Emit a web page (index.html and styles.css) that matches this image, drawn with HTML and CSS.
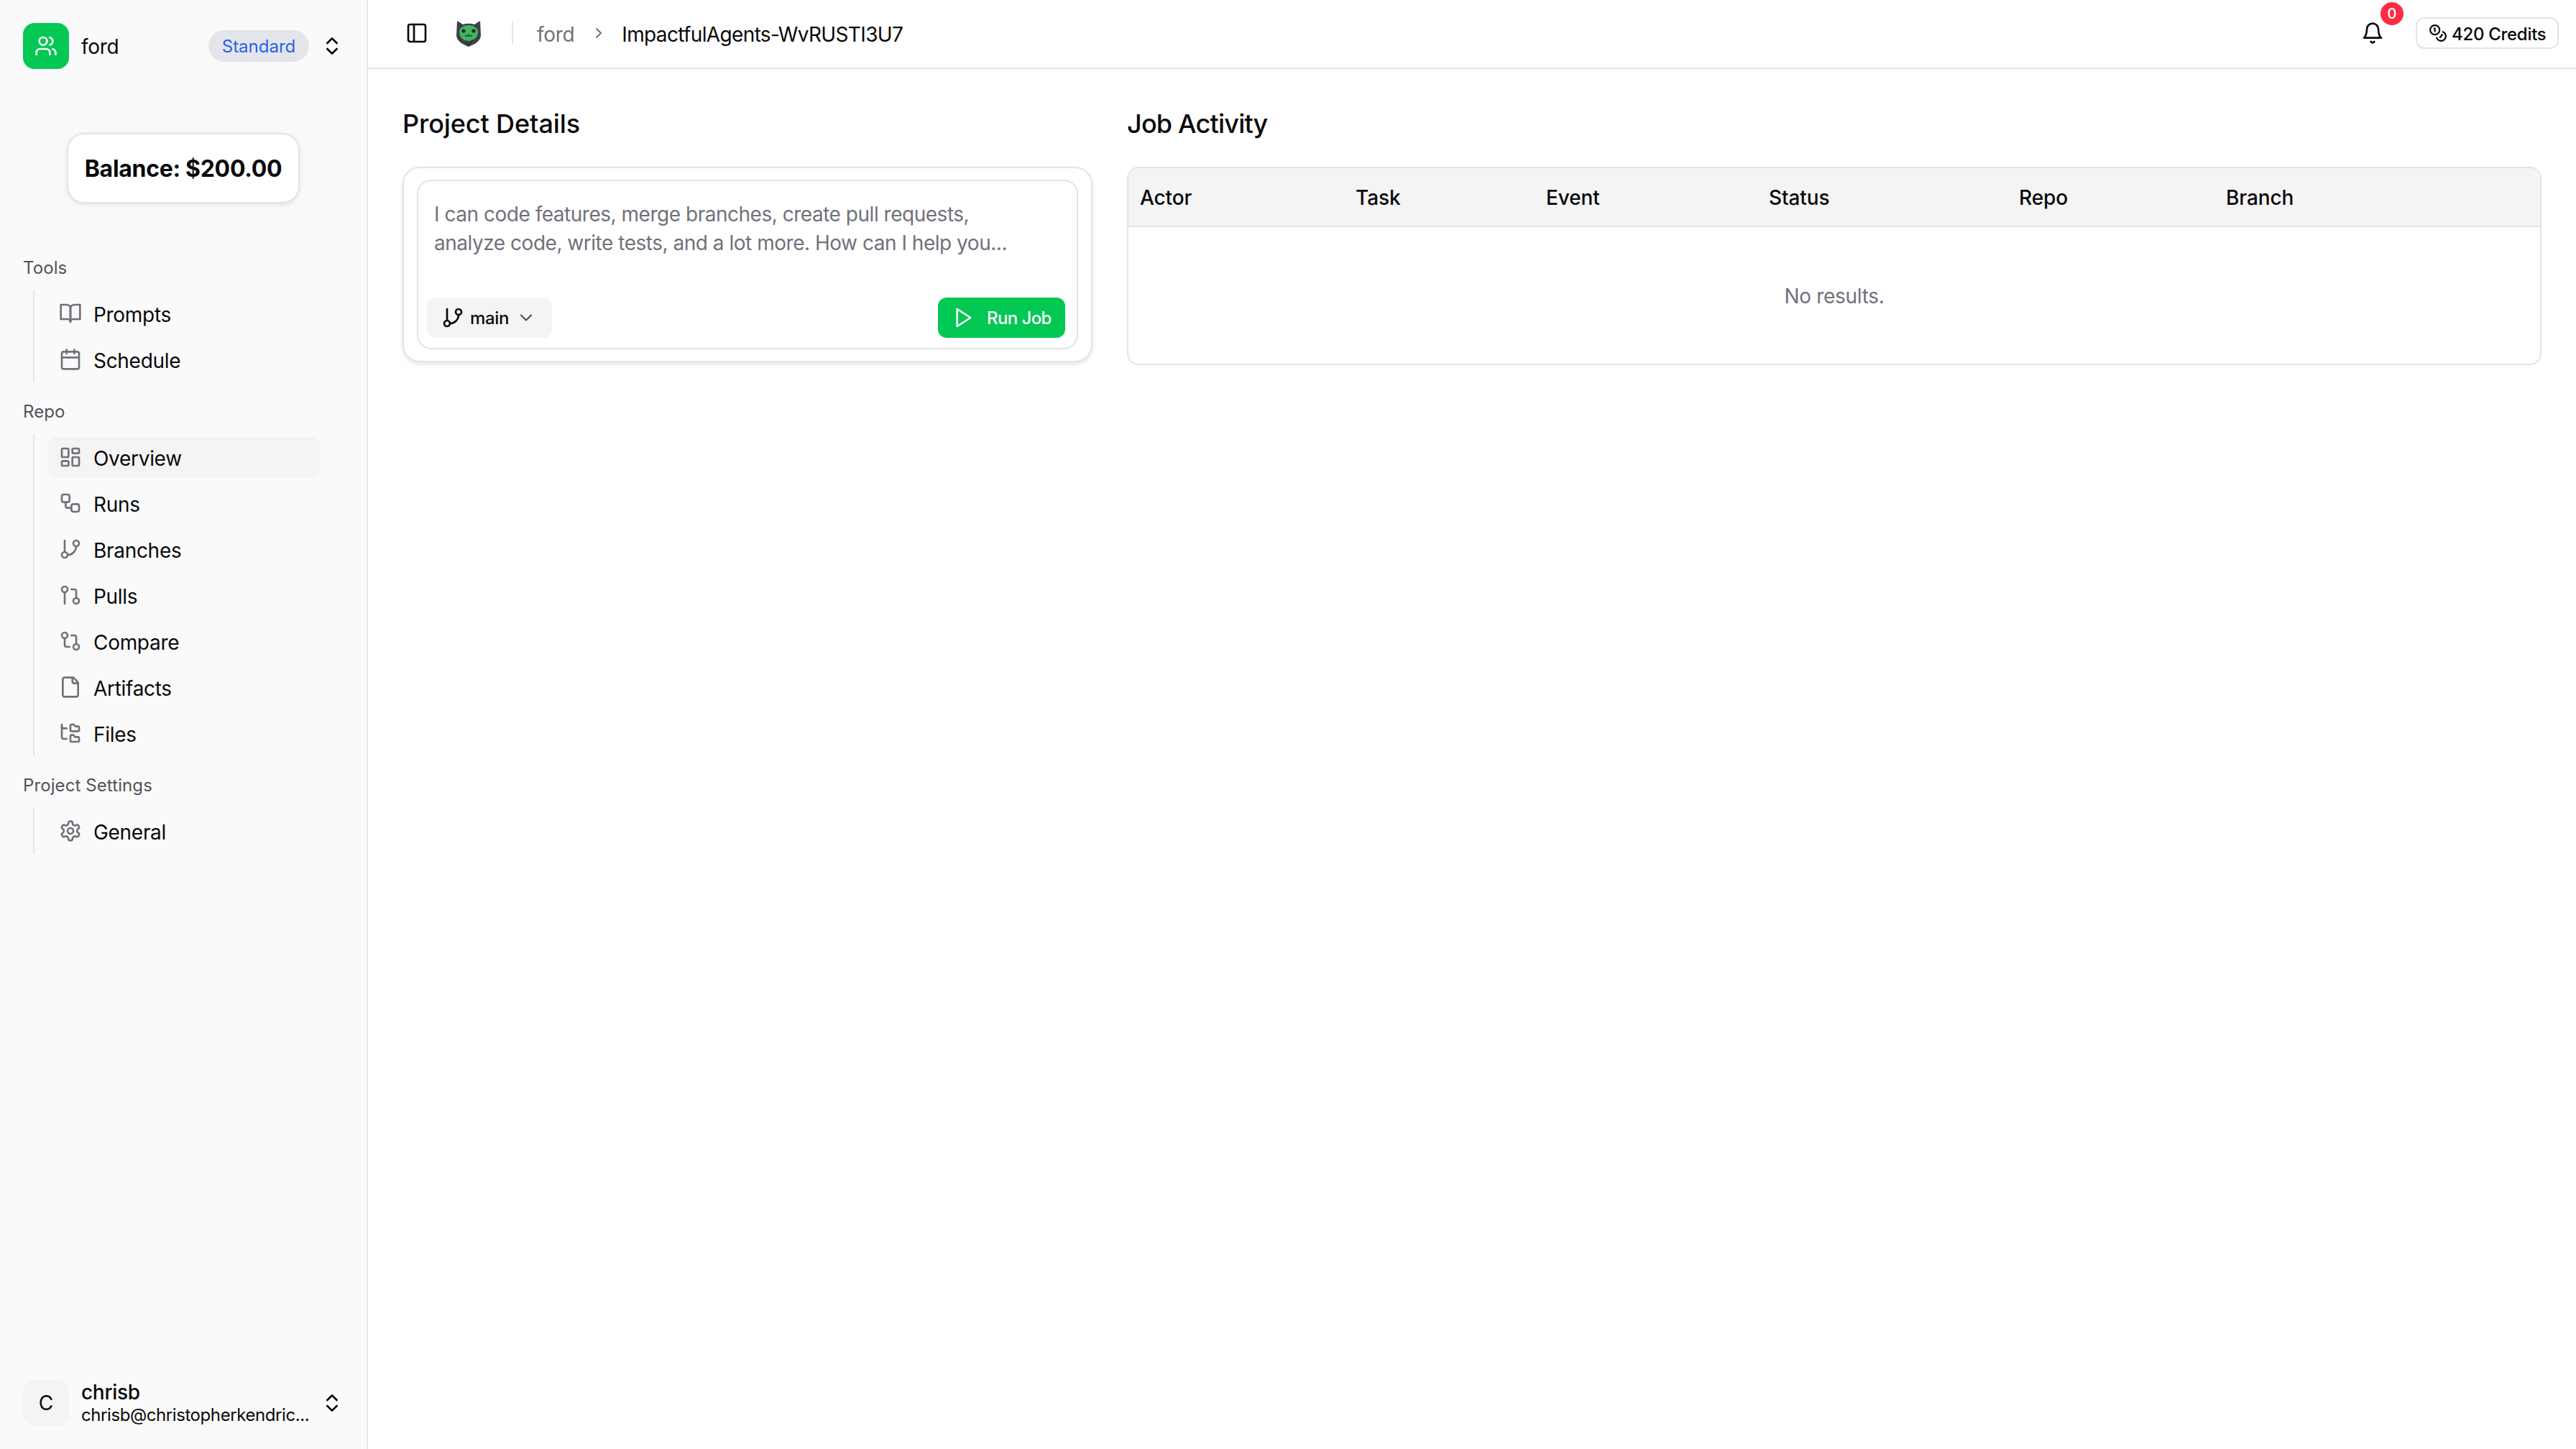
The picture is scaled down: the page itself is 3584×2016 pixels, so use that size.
FILE: index.html
```html
<!DOCTYPE html>
<html lang="en">
<head>
<meta charset="utf-8">
<title>ImpactfulAgents</title>
<link rel="stylesheet" href="styles.css">
</head>
<body>
<svg class="sprite" xmlns="http://www.w3.org/2000/svg">
<symbol id="users" viewBox="0 0 24 24"><path d="M16 21v-2a4 4 0 0 0-4-4H6a4 4 0 0 0-4 4v2"/><circle cx="9" cy="7" r="4"/><path d="M22 21v-2a4 4 0 0 0-3-3.87"/><path d="M16 3.13a4 4 0 0 1 0 7.75"/></symbol>
<symbol id="updown" viewBox="0 0 24 24"><path d="m7 15 5 5 5-5"/><path d="m7 9 5-5 5 5"/></symbol>
<symbol id="book" viewBox="0 0 24 24"><path d="M2 3h6a4 4 0 0 1 4 4v14a3 3 0 0 0-3-3H2z"/><path d="M22 3h-6a4 4 0 0 0-4 4v14a3 3 0 0 1 3-3h7z"/></symbol>
<symbol id="calendar" viewBox="0 0 24 24"><rect width="18" height="18" x="3" y="4" rx="2"/><path d="M16 2v4M8 2v4M3 10h18"/></symbol>
<symbol id="dash" viewBox="0 0 24 24"><rect width="7" height="9" x="3" y="3" rx="1"/><rect width="7" height="5" x="14" y="3" rx="1"/><rect width="7" height="9" x="14" y="12" rx="1"/><rect width="7" height="5" x="3" y="16" rx="1"/></symbol>
<symbol id="workflow" viewBox="0 0 24 24"><rect width="8" height="8" x="3" y="3" rx="2"/><path d="M7 11v4a2 2 0 0 0 2 2h4"/><rect width="8" height="8" x="13" y="13" rx="2"/></symbol>
<symbol id="branch" viewBox="0 0 24 24"><path d="M6 3v12"/><circle cx="18" cy="6" r="3"/><circle cx="6" cy="18" r="3"/><path d="M18 9a9 9 0 0 1-9 9"/></symbol>
<symbol id="pull" viewBox="0 0 24 24"><circle cx="18" cy="18" r="3"/><circle cx="6" cy="6" r="3"/><path d="M13 6h3a2 2 0 0 1 2 2v7"/><path d="M6 9v12"/></symbol>
<symbol id="compare" viewBox="0 0 24 24"><circle cx="18" cy="18" r="3"/><circle cx="6" cy="6" r="3"/><path d="M13 6h3a2 2 0 0 1 2 2v7"/><path d="M11 18H8a2 2 0 0 1-2-2V9"/></symbol>
<symbol id="file" viewBox="0 0 24 24"><path d="M15 2H6a2 2 0 0 0-2 2v16a2 2 0 0 0 2 2h12a2 2 0 0 0 2-2V7Z"/><path d="M14 2v4a2 2 0 0 0 2 2h4"/></symbol>
<symbol id="tree" viewBox="0 0 24 24"><path d="M20 10a1 1 0 0 0 1-1V6a1 1 0 0 0-1-1h-2.5a1 1 0 0 1-.8-.4l-.9-1.2A1 1 0 0 0 15 3h-2a1 1 0 0 0-1 1v5a1 1 0 0 0 1 1Z"/><path d="M20 21a1 1 0 0 0 1-1v-3a1 1 0 0 0-1-1h-2.9a1 1 0 0 1-.88-.55l-.42-.85a1 1 0 0 0-.92-.6H13a1 1 0 0 0-1 1v5a1 1 0 0 0 1 1Z"/><path d="M3 5a2 2 0 0 0 2 2h3"/><path d="M3 3v13a2 2 0 0 0 2 2h3"/></symbol>
<symbol id="gear" viewBox="0 0 24 24"><path d="M12.22 2h-.44a2 2 0 0 0-2 2v.18a2 2 0 0 1-1 1.73l-.43.25a2 2 0 0 1-2 0l-.15-.08a2 2 0 0 0-2.73.73l-.22.38a2 2 0 0 0 .73 2.73l.15.1a2 2 0 0 1 1 1.72v.51a2 2 0 0 1-1 1.74l-.15.09a2 2 0 0 0-.73 2.73l.22.38a2 2 0 0 0 2.73.73l.15-.08a2 2 0 0 1 2 0l.43.25a2 2 0 0 1 1 1.73V20a2 2 0 0 0 2 2h.44a2 2 0 0 0 2-2v-.18a2 2 0 0 1 1-1.73l.43-.25a2 2 0 0 1 2 0l.15.08a2 2 0 0 0 2.73-.73l.22-.39a2 2 0 0 0-.73-2.73l-.15-.08a2 2 0 0 1-1-1.74v-.5a2 2 0 0 1 1-1.74l.15-.09a2 2 0 0 0 .73-2.73l-.22-.38a2 2 0 0 0-2.73-.73l-.15.08a2 2 0 0 1-2 0l-.43-.25a2 2 0 0 1-1-1.73V4a2 2 0 0 0-2-2z"/><circle cx="12" cy="12" r="3"/></symbol>
<symbol id="panel" viewBox="0 0 24 24"><rect width="18" height="18" x="3" y="3" rx="2"/><path d="M9 3v18"/></symbol>
<symbol id="bell" viewBox="0 0 24 24"><path d="M6 8a6 6 0 0 1 12 0c0 7 3 9 3 9H3s3-2 3-9"/><path d="M10.3 21a1.94 1.94 0 0 0 3.4 0"/></symbol>
<symbol id="coins" viewBox="0 0 24 24"><circle cx="8" cy="8" r="6"/><path d="M18.09 10.37A6 6 0 1 1 10.34 18"/><path d="M7 6h1v4"/><path d="m16.71 13.88.7.71-2.82 2.82"/></symbol>
<symbol id="play" viewBox="0 0 24 24"><path d="M5 3l14 9-14 9z"/></symbol>
<symbol id="down" viewBox="0 0 24 24"><path d="m6 9 6 6 6-6"/></symbol>
<symbol id="right" viewBox="0 0 24 24"><path d="m9 18 6-6-6-6"/></symbol>
</svg>

<div class="app">
  <aside class="sidebar">
    <div class="team">
      <span class="team-logo"><svg class="icon ic-team"><use href="#users"/></svg></span>
      <span class="team-name">ford</span>
      <span class="plan">Standard</span>
      <svg class="icon ic-updown"><use href="#updown"/></svg>
    </div>
    <div class="balance">Balance: $200.00</div>

    <nav class="nav">
      <div class="nav-label nav-label-first">Tools</div>
      <ul class="nav-list">
        <li class="nav-item"><svg class="icon"><use href="#book"/></svg><span class="nav-text">Prompts</span></li>
        <li class="nav-item"><svg class="icon"><use href="#calendar"/></svg><span class="nav-text">Schedule</span></li>
      </ul>
      <div class="nav-label">Repo</div>
      <ul class="nav-list">
        <li class="nav-item active"><svg class="icon"><use href="#dash"/></svg><span class="nav-text">Overview</span></li>
        <li class="nav-item"><svg class="icon"><use href="#workflow"/></svg><span class="nav-text">Runs</span></li>
        <li class="nav-item"><svg class="icon"><use href="#branch"/></svg><span class="nav-text">Branches</span></li>
        <li class="nav-item"><svg class="icon"><use href="#pull"/></svg><span class="nav-text">Pulls</span></li>
        <li class="nav-item"><svg class="icon"><use href="#compare"/></svg><span class="nav-text">Compare</span></li>
        <li class="nav-item"><svg class="icon"><use href="#file"/></svg><span class="nav-text">Artifacts</span></li>
        <li class="nav-item"><svg class="icon"><use href="#tree"/></svg><span class="nav-text">Files</span></li>
      </ul>
      <div class="nav-label">Project Settings</div>
      <ul class="nav-list">
        <li class="nav-item"><svg class="icon"><use href="#gear"/></svg><span class="nav-text">General</span></li>
      </ul>
    </nav>

    <div class="user">
      <span class="avatar">C</span>
      <span class="user-text">
        <span class="user-name">chrisb</span>
        <span class="user-mail">chrisb@christopherkendric...</span>
      </span>
      <svg class="icon ic-updown"><use href="#updown"/></svg>
    </div>
  </aside>

  <main class="main">
    <header class="topbar">
      <svg class="icon ic-panel"><use href="#panel"/></svg>
      <svg class="cat" viewBox="0 0 38 38" xmlns="http://www.w3.org/2000/svg">
        <path class="cat-body" d="M3 2l8 5c5-1.600 11-1.600 16 0l8-5 1 20c0 8-9 13-17 16C11 35 2 30 2 22z"/>
        <path class="cat-face" d="M6 17c0-5 6-9 13-9s13 4 13 9c0 6-4 11-8 12l-5 1-5-1c-4-1-8-6-8-12z"/>
        <circle class="cat-eye" cx="12" cy="16" r="2.600"/>
        <circle class="cat-eye" cx="26" cy="16" r="2.600"/>
        <path class="cat-line" d="M14 22c2 2 3 2 5 0 2 2 3 2 5 0M19 20v2M15 33l4 3 6-8"/>
      </svg>
      <span class="divider"></span>
      <span class="crumb-muted">ford</span>
      <svg class="icon ic-crumb"><use href="#right"/></svg>
      <span class="crumb">ImpactfulAgents-WvRUSTI3U7</span>
      <span class="topbar-right">
        <span class="bell">
          <svg class="icon ic-bell"><use href="#bell"/></svg>
          <span class="badge">0</span>
        </span>
        <span class="credits"><svg class="icon ic-coins"><use href="#coins"/></svg><span class="credits-text">420 Credits</span></span>
      </span>
    </header>

    <div class="content">
      <section>
        <h2 class="title title-project">Project Details</h2>
        <div class="panel">
          <div class="composer">
            <p class="prompt">I can code features, merge branches, create pull requests, analyze code, write tests, and a lot more. How can I help you...</p>
            <div class="composer-foot">
              <span class="btn-branch"><svg class="icon ic-btn"><use href="#branch"/></svg>main<svg class="icon ic-down"><use href="#down"/></svg></span>
              <span class="btn-run"><svg class="icon ic-btn"><use href="#play"/></svg>Run Job</span>
            </div>
          </div>
        </div>
      </section>
      <section>
        <h2 class="title title-job">Job Activity</h2>
        <div class="table">
          <div class="thead">
            <span>Actor</span><span>Task</span><span>Event</span><span>Status</span><span>Repo</span><span>Branch</span>
          </div>
          <div class="tbody">No results.</div>
        </div>
      </section>
    </div>
  </main>
</div>
</body>
</html>
```
FILE: styles.css
```css
* { box-sizing: border-box; }
html, body { margin: 0; padding: 0; }
body {
  font-family: Inter, "Noto Sans", sans-serif;
  color: #09090b;
  background: #fff;
  font-size: 28px;
}
.sprite { display: none; }
.icon {
  width: 32px;
  height: 32px;
  flex: none;
  fill: none;
  stroke: currentColor;
  stroke-width: 2;
  stroke-linecap: round;
  stroke-linejoin: round;
}
.app { display: flex; height: 2016px; overflow: hidden; }

/* sidebar */
.sidebar {
  width: 512px;
  flex: none;
  display: flex;
  flex-direction: column;
  padding: 32px 32px 32px;
  background: #fafafa;
  border-right: 2px solid #e4e4e7;
}
.team { display: flex; align-items: center; height: 64px; }
.team-logo {
  width: 64px;
  height: 64px;
  border-radius: 16px;
  background: #03c853;
  color: #fafafa;
  display: flex;
  align-items: center;
  justify-content: center;
}
.ic-team { width: 32px; height: 32px; }
.team-name { margin-left: 17px; padding-top: 2px; font-size: 28px; letter-spacing: -0.3px; }
.plan {
  margin-left: auto;
  height: 44px;
  width: 140px;
  border-radius: 22px;
  background: #e4e5eb;
  color: #2563eb;
  font-size: 24px;
  line-height: 46px;
  text-align: center;
  letter-spacing: 0;
}
.ic-updown { margin-left: 16px; margin-right: 0; color: #09090b; }
.balance {
  align-self: center;
  width: 324px;
  height: 98px;
  margin-top: 89px;
  border: 2px solid #e4e4e7;
  border-radius: 24px;
  background: #fff;
  box-shadow: 0 2px 6px rgba(0, 0, 0, 0.1);
  font-size: 32px;
  font-weight: 700;
  line-height: 96px;
  text-align: center;
  letter-spacing: -0.3px;
  white-space: nowrap;
}
.nav { margin-top: 73px; }
.nav-label {
  margin-top: 24px;
  height: 32px;
  font-size: 24px;
  line-height: 34px;
  color: #52525b;
  letter-spacing: 0.1px;
}
.nav-label-first { margin-top: 0; }
.nav-list {
  list-style: none;
  margin: 16px 0 0 14px;
  padding: 4px 0 4px 18px;
  width: 400px;
  border-left: 2px solid #e4e4e7;
  display: flex;
  flex-direction: column;
  gap: 8px;
}
.nav-item {
  display: flex;
  align-items: center;
  gap: 16px;
  height: 56px;
  padding-left: 16px;
  border-radius: 12px;
  letter-spacing: -0.3px;
}
.nav-text { padding-top: 3px; }
.nav-item .icon { color: #71717a; }
.nav-item.active { background: #f4f4f5; }
.user { display: flex; align-items: center; margin-top: auto; height: 64px; }
.avatar {
  width: 64px;
  height: 64px;
  flex: none;
  border-radius: 16px;
  background: #f4f4f5;
  display: flex;
  align-items: center;
  justify-content: center;
}
.user-text {
  margin-left: 17px;
  flex: none;
  display: flex;
  flex-direction: column;
  padding-top: 2px;
}
.user-name { font-size: 28px; line-height: 32px; font-weight: 450; letter-spacing: -0.3px; }
.user-mail {
  font-size: 24px;
  line-height: 32px;
  white-space: nowrap;
  letter-spacing: -0.42px;
}
.user .ic-updown { margin-left: auto; margin-right: 0; }

/* topbar */
.main { flex: 1; min-width: 0; display: flex; flex-direction: column; }
.topbar {
  height: 96px;
  flex: none;
  display: flex;
  align-items: center;
  padding: 0 24px 2px 52px;
  border-bottom: 2px solid #e4e4e7;
}
.cat { width: 38px; height: 38px; margin-left: 37px; flex: none; }
.cat-body { fill: #3f3f46; }
.cat-face { fill: #3fb65f; }
.cat-eye { fill: #27272a; }
.cat-line { fill: none; stroke: #27272a; stroke-width: 1.2; }
.divider { width: 2px; height: 32px; margin-left: 41px; background: #e4e4e7; }
.crumb-muted { margin-left: 33px; padding-top: 3px; color: #71717a; letter-spacing: -0.3px; }
.ic-crumb { width: 24px; height: 24px; margin-left: 22px; color: #71717a; }
.crumb { margin-left: 20px; padding-top: 3px; letter-spacing: -0.65px; white-space: nowrap; }
.topbar-right { margin-left: auto; display: flex; align-items: center; }
.bell { position: relative; display: flex; width: 32px; height: 32px; }
.badge {
  position: absolute;
  top: -27px;
  left: 27px;
  width: 32px;
  height: 32px;
  border-radius: 50%;
  background: #fb2c46;
  color: #fff;
  font-size: 20px;
  font-weight: 500;
  line-height: 32px;
  text-align: center;
}
.credits {
  margin-left: 44px;
  width: 199px;
  height: 44px;
  display: flex;
  align-items: center;
  gap: 6px;
  padding-left: 16px;
  border: 2px solid #e4e4e7;
  border-radius: 12px;
  font-size: 24px;
  font-weight: 450;
  letter-spacing: -0.3px;
  white-space: nowrap;
}
.credits-text { padding-top: 2px; }
.ic-coins { width: 26px; height: 26px; }

/* content */
.content {
  display: grid;
  grid-template-columns: 960px 1fr;
  column-gap: 48px;
  padding: 48px 48px 0;
}
.title {
  margin: 0 0 32px;
  font-size: 36px;
  font-weight: 500;
  line-height: 56px;
}
.title-project { letter-spacing: -0.1px; }
.title-job { letter-spacing: -0.8px; }
.panel {
  height: 272px;
  padding: 16px 18px;
  border: 2px solid #e4e4e7;
  border-radius: 24px;
  background: #fff;
  box-shadow: 0 3px 6px rgba(0, 0, 0, 0.1);
}
.composer {
  height: 236px;
  border: 2px solid #e4e4e7;
  border-radius: 20px;
  padding: 0 16px 14px 12px;
  display: flex;
  flex-direction: column;
}
.prompt {
  margin: 26px 0 0 10px;
  width: 810px;
  font-size: 28px;
  line-height: 40px;
  color: #71717a;
  letter-spacing: -0.48px;
}
.composer-foot {
  margin-top: auto;
  display: flex;
  justify-content: space-between;
}
.btn-branch, .btn-run {
  height: 56px;
  display: flex;
  align-items: center;
  border-radius: 12px;
  font-size: 24px;
  font-weight: 450;
  letter-spacing: -0.3px;
}
.btn-branch { width: 174px; padding-left: 20px; background: #f4f4f5; }
.btn-run { width: 177px; padding-left: 20px; background: #03c853; color: #fff; gap: 16px; letter-spacing: -0.6px; }
.ic-btn { width: 32px; height: 32px; }
.btn-branch .ic-btn { margin-right: 8px; }
.ic-down { width: 28px; height: 28px; margin-left: 10px; color: #52525b; }
.table {
  height: 276px;
  border: 2px solid #e4e4e7;
  border-radius: 16px;
  overflow: hidden;
  display: flex;
  flex-direction: column;
}
.thead {
  height: 82px;
  flex: none;
  display: grid;
  grid-template-columns: 300px 265px 310px 348px 288px 1fr;
  align-items: center;
  padding: 2px 0 0 16px;
  background: #f4f4f5;
  border-bottom: 2px solid #e4e4e7;
  font-weight: 450;
  letter-spacing: -0.1px;
}
.tbody {
  flex: 1;
  display: flex;
  align-items: center;
  justify-content: center;
  padding-top: 2px;
  color: #71717a;
  letter-spacing: -0.3px;
}
```
